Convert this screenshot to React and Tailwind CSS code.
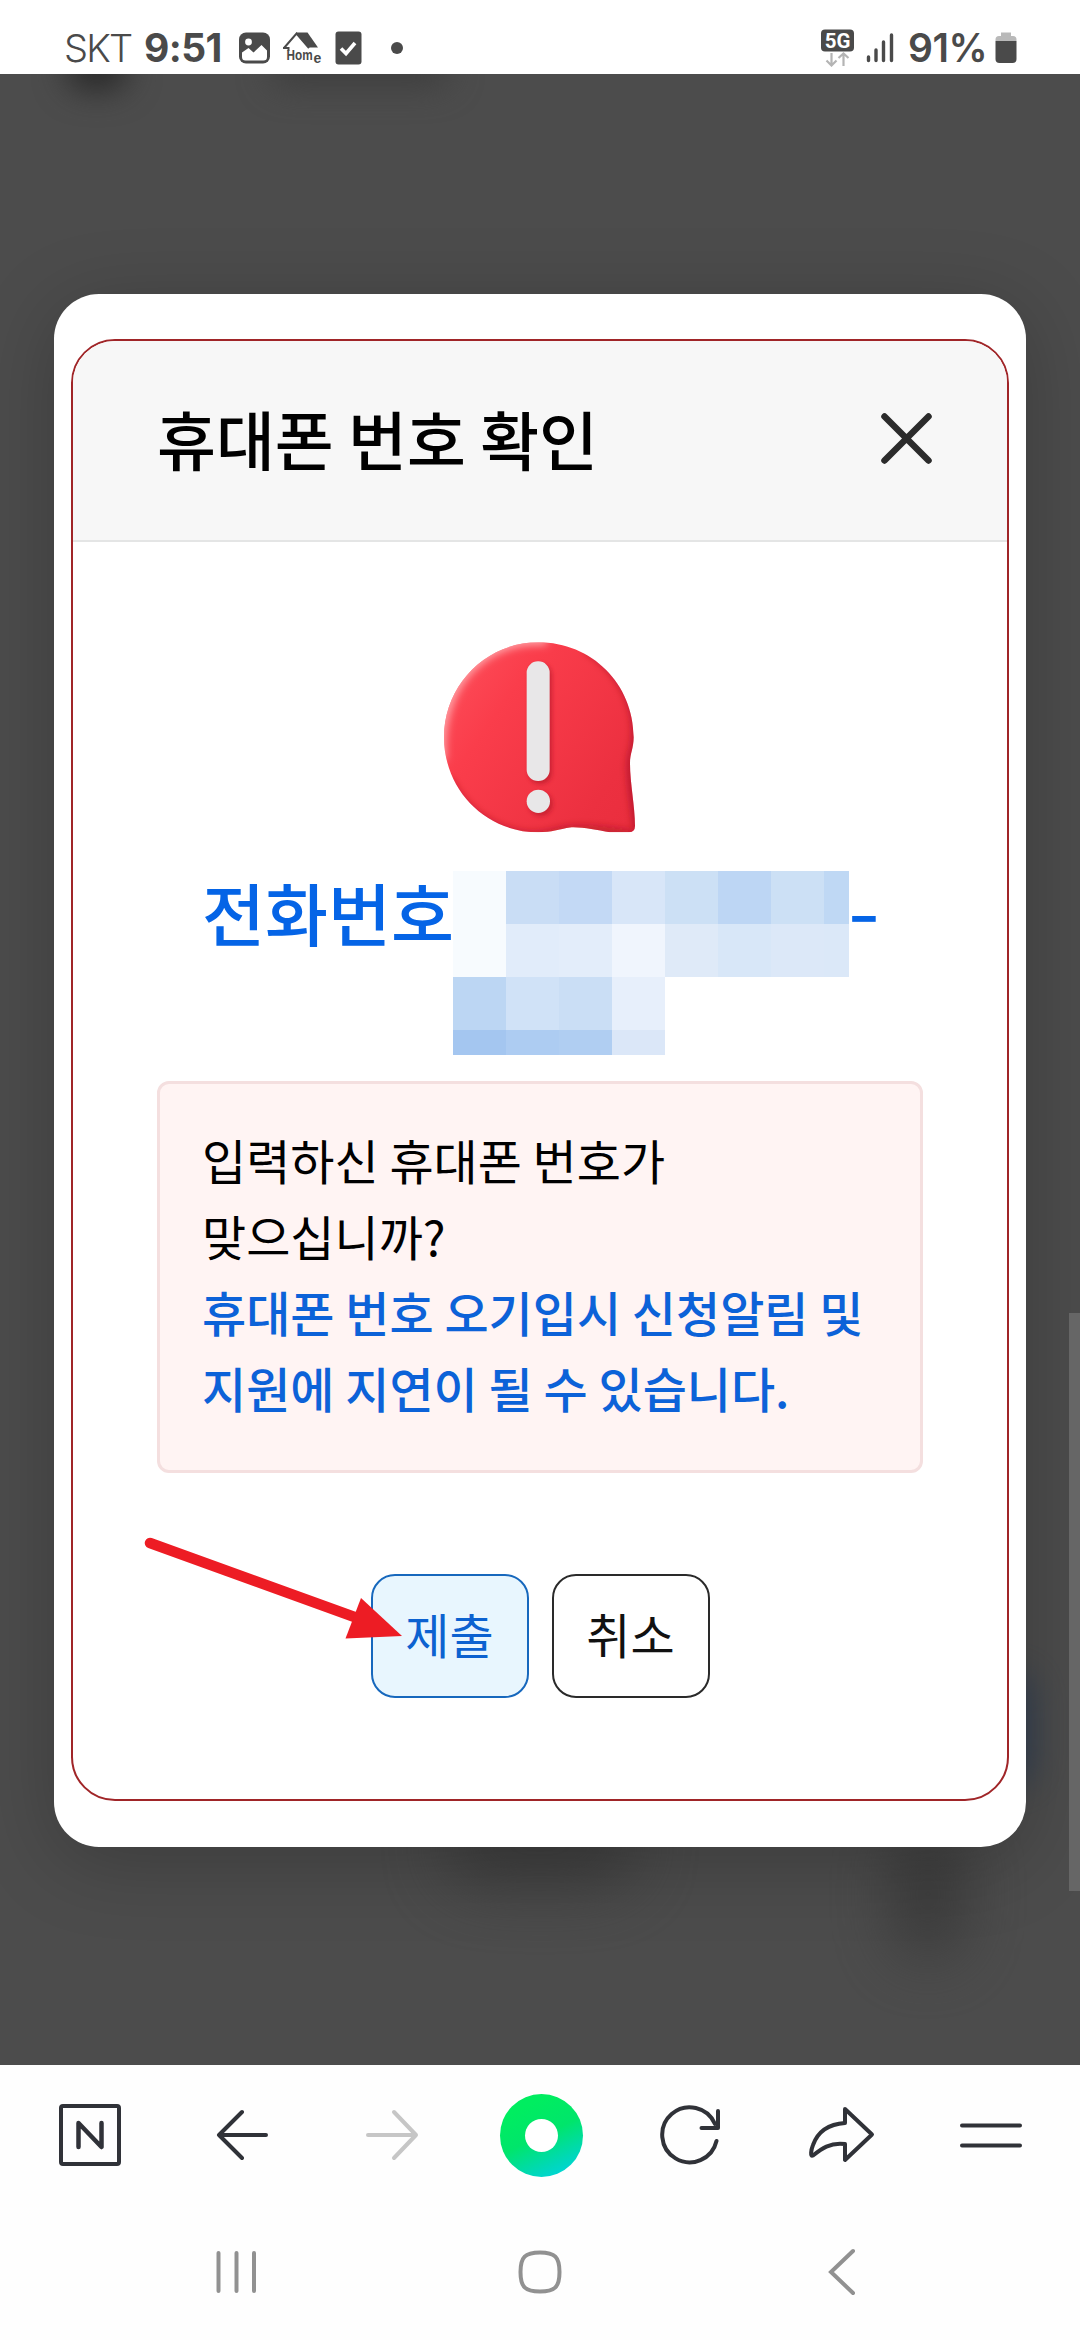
const KR = 'font-["Noto_Sans_CJK_KR",sans-serif]';

const MOSAIC = [
  ["bg-[#f7fbfe]", "bg-[#c9ddf5]", "bg-[#c3d9f5]", "bg-[#d8e6f8]", "bg-[#cce0f5]", "bg-[#bdd6f4]", "bg-[#cce0f5]", "bg-[#bfd8f4]"],
  ["bg-[#f7fbfe]", "bg-[#e1ecfa]", "bg-[#e3edfa]", "bg-[#f0f5fd]", "bg-[#dfeaf8]", "bg-[#d8e7f8]", "bg-[#dce8f8]", "bg-[#dbe8f8]"],
  ["bg-[#bcd6f3]", "bg-[#d0e2f7]", "bg-[#cadef5]", "bg-[#e7effb]"],
  ["bg-[#a4c6f0]", "bg-[#adccf2]", "bg-[#b0cef2]", "bg-[#dbe7f8]"],
];

function StatusBar() {
  return (
    <header className="flex h-[74px] shrink-0 items-center bg-white pt-[22px] pl-[64px] pr-[63px] font-[Inter,sans-serif] text-[#4a4a4a]">
      <span className="w-[80px] text-[38px] leading-[44px] font-light tracking-[-1.8px]">SKT</span>
      <span className="w-[95px] text-[39px] leading-[44px] font-bold tracking-[-0.600px]">9:51</span>
      <svg className="h-[32px] w-[32px]" viewBox="0 0 32 32">
        <rect x="0" y="0.5" width="31" height="31" rx="7" fill="#4a4a4a" />
        <circle cx="9.5" cy="10" r="3.4" fill="#fff" />
        <path d="M3 20.5 L9.5 16 L14.5 20.5 L22.5 13 L28 18.5 V25 Q28 28.5 24.5 28.5 H6.500 Q3 28.5 3 25 Z" fill="#fff" />
      </svg>
      <svg className="ml-[11px] h-[36px] w-[42px]" viewBox="0 0 42 36">
        <path d="M2 18 L14.500 3.500 L27 18 M1 18 H6.500 V21" fill="none" stroke="#4a4a4a" strokeWidth="2" />
        <path d="M14 2.500 H25.500 L36 17.500 H27 Z" fill="#4a4a4a" />
        <text x="0" y="0" transform="translate(4.5 30) scale(0.76 1)" fontSize="15.500" fontWeight="700" fontFamily="Liberation Sans" fill="#4a4a4a">Hom</text>
        <text x="31.500" y="33" fontSize="14" fontWeight="700" fontFamily="Liberation Sans" fill="#4a4a4a">e</text>
      </svg>
      <svg className="ml-[11px] h-[34px] w-[28px]" viewBox="0 0 28 34">
        <rect x="0.5" y="0.5" width="26" height="33" rx="3" fill="#4a4a4a" />
        <path d="M6 17.5 L11 22.5 L20 12" fill="none" stroke="#fff" strokeWidth="3.6" />
      </svg>
      <span className="ml-[28px] size-[12px] rounded-full bg-[#4a4a4a]" />
      <svg className="ml-auto h-[38px] w-[35px]" viewBox="0 0 35 38">
        <rect x="1" y="0.500" width="33" height="22" rx="4" fill="#4a4a4a" />
        <text x="17.5" y="18.500" textAnchor="middle" fontSize="20.500" fontWeight="700" fontFamily="Roboto" fill="#fff">5G</text>
        <path d="M11.500 24 V36 M6.500 31.500 L11.500 36.500 L16.500 31.500 M23.500 37 V25 M18.500 29 L23.500 24.500 L28.500 29" fill="none" stroke="#b4b4b4" strokeWidth="2.2" />
      </svg>
      <svg className="ml-[11px] h-[32px] w-[30px]" viewBox="0 0 30 32">
        <path d="M2.500 25 V28.500 M10 18 V28.500 M17.500 10 V28.500 M25.500 3 V28.500" stroke="#4a4a4a" strokeWidth="3.4" strokeLinecap="round" />
      </svg>
      <span className="ml-[12px] w-[87px] text-[39px] leading-[44px] font-semibold tracking-[-0.500px] whitespace-nowrap">91%</span>
      <svg className="h-[32px] w-[22px]" viewBox="0 0 22 32">
        <path d="M0.500 9 V7.500 Q0.500 4 4 4 H6 V0.500 H16 V4 H18 Q21.500 4 21.500 7.500 V9 Z" fill="#b9b9b9" />
        <path d="M0.500 9 H21.500 V27 Q21.500 31 17.500 31 H4.500 Q0.500 31 0.500 27 Z" fill="#4a4a4a" />
      </svg>
    </header>
  );
}

function AlertBubble() {
  return (
    <svg className="mx-auto block size-[240px]" viewBox="0 0 720 720">
      <defs>
        <linearGradient id="bubble" x1="0" y1="0.1" x2="1" y2="0.8">
          <stop offset="0" stopColor="#ff5560" />
          <stop offset="0.35" stopColor="#fa3d4b" />
          <stop offset="0.8" stopColor="#ec3040" />
          <stop offset="1" stopColor="#e92d3d" />
        </linearGradient>
        <clipPath id="bubbleClip">
          <path d="M355 67 C515 67 641 192 641 352 C641 385 630 400 630 430 C630 490 645 560 645 618 Q645 637 625 637 H570 C530 630 490 621 455 622 C410 628 400 637 355 637 C197 637 72 510 72 352 C72 195 197 67 355 67 Z" />
        </clipPath>
        <filter id="soft" x="-20%" y="-20%" width="140%" height="140%"><feGaussianBlur stdDeviation="12" /></filter>
        <filter id="markShadow" x="-50%" y="-50%" width="200%" height="200%"><feGaussianBlur stdDeviation="6" /></filter>
      </defs>
      <g clipPath="url(#bubbleClip)">
        <rect width="720" height="720" fill="url(#bubble)" />
        <path d="M65 420 C45 200 190 45 380 62" fill="none" stroke="#ffb0b4" strokeWidth="26" filter="url(#soft)" />
        <path d="M500 85 C620 160 665 280 643 390 C622 430 642 520 655 640" fill="none" stroke="#8f1020" strokeWidth="14" filter="url(#soft)" />
        <path d="M85 480 C150 610 290 670 400 640 Q460 615 640 645" fill="none" stroke="#a01222" strokeWidth="14" filter="url(#soft)" />
      </g>
      <g fill="#b01525" opacity="0.6" filter="url(#markShadow)">
        <rect x="326" y="132" width="70" height="360" rx="34" />
        <circle cx="362" cy="552" r="36" />
      </g>
      <rect x="320" y="124" width="69" height="359" rx="34" fill="#e8e7e8" />
      <circle cx="355" cy="544" r="35" fill="#e8e7e8" />
    </svg>
  );
}

function PhoneLine() {
  return (
    <div className={`flex h-[184px] items-start pl-[129px] text-[68.500px] leading-[100px] font-medium text-[#0564e6] ${KR}`}>
      <span className="-mt-[9px] w-[251px] whitespace-nowrap">전화번호</span>
      <div className="flex flex-col">
        {MOSAIC.map((row, r) => (
          <div key={r} className={r === 3 ? "flex h-[25px]" : "flex h-[53px]"}>
            {row.map((c, i) => (
              <span key={i} className={`${i === 7 ? "w-[25px]" : "w-[53px]"} ${c}`} />
            ))}
          </div>
        ))}
      </div>
      <span className="-mt-[12px] -ml-[1px] origin-left scale-x-[1.3]">-</span>
    </div>
  );
}

function Dialog() {
  return (
    <section className="relative mx-[54px] mt-[220px] h-[1553px] rounded-[45px] bg-white px-[17px] pt-[45px] shadow-[0_14px_80px_rgba(0,0,0,0.22)]">
      <div className="flex h-[1462px] flex-col overflow-hidden rounded-[44px] border-2 border-[#a02528]">
        <div className="flex h-[201px] shrink-0 items-center justify-between border-b-2 border-[#e4e5e5] bg-[#f7f7f7] pr-[75px] pb-[5px] pl-[84px]">
          <h1 className={`-mt-[3px] text-[64px] leading-[90px] font-medium text-black ${KR}`}>휴대폰 번호 확인</h1>
          <svg className="size-[52px]" viewBox="0 0 52 52">
            <path d="M4.500 4.500 L48.500 48.500 M48.500 4.500 L4.500 48.500" stroke="#2b2b2b" strokeWidth="6.500" strokeLinecap="round" />
          </svg>
        </div>
        <div className="pt-[78px]">
          <AlertBubble />
        </div>
        <div className="mt-[11px]">
          <PhoneLine />
        </div>
        <div className={`mx-[84px] mt-[26px] h-[392px] shrink-0 rounded-[12px] border-[3px] border-[#f4dfdf] bg-[#fff4f3] pt-[37px] pl-[42px] text-[48px] leading-[76px] text-black ${KR}`}>
          <p>입력하신 휴대폰 번호가<br />맞으십니까?</p>
          <p className="font-medium whitespace-nowrap text-[#0c62d8]">휴대폰 번호 오기입시 신청알림 및<br />지원에 지연이 될 수 있습니다.</p>
        </div>
        <div className={`mt-[101px] flex justify-center gap-[23px] text-[48px] ${KR}`}>
          <button className="h-[124px] w-[158px] rounded-[24px] border-2 border-[#1768bd] bg-[#e8f6fe] pb-[7px] text-[#0c62d0]">제출</button>
          <button className="h-[124px] w-[158px] rounded-[24px] border-2 border-[#2a2a2a] bg-white pb-[7px] text-[#111]">취소</button>
        </div>
      </div>
      <svg className="absolute top-[1235px] left-[82px] h-[120px] w-[274px]" viewBox="136 1529 274 120">
        <path d="M150 1543 L360 1619" stroke="#ed1c24" strokeWidth="10.500" strokeLinecap="round" />
        <path d="M361 1598 L402 1636 L345.500 1638.500 Z" fill="#ed1c24" />
      </svg>
    </section>
  );
}

function BrowserBar() {
  const line = { fill: "none", stroke: "#303238", strokeWidth: 4, strokeLinecap: "round", strokeLinejoin: "round" };
  return (
    <nav className="flex h-[140px] shrink-0 items-center justify-between pr-[56px] pl-[57px]">
      <svg className="size-[66px]" viewBox="0 0 66 66">
        <rect x="4" y="4" width="58" height="58" rx="2" {...line} />
        <path d="M21.500 45 V21 L44.500 45 V21" {...line} strokeWidth="4.500" />
      </svg>
      <svg className="ml-[24px] size-[56px]" viewBox="2 0 56 56">
        <path d="M28 5 L5 28 L28 51 M5 28 H52" {...line} />
      </svg>
      <svg className="ml-[24px] size-[56px]" viewBox="0 0 56 56">
        <path d="M29 5 L51 28 L29 51 M51 28 H3" {...line} stroke="#c6c6c6" />
      </svg>
      <span className="ml-[10px] flex size-[83px] items-center justify-center rounded-full bg-[linear-gradient(155deg,#00ed60_20%,#00e56b_50%,#00d8b8_78%,#00d3f0_100%)]">
        <span className="size-[33px] rounded-full bg-white" />
      </span>
      <svg className="ml-[5px] size-[64px]" viewBox="657 2103 64 64">
        <path d="M715.500 2141 A27.500 27.500 0 1 1 714 2124 M717 2111 V2128 H700.500" {...line} />
      </svg>
      <svg className="ml-[16px] size-[70px]" viewBox="806 2100 70 70">
        <path d="M844 2109 L871 2134.500 L844 2160 V2144 C829 2142 820 2149 812 2155.500 C809 2157 810 2150 812 2145 C817 2131 829 2124 844 2123 Z" {...line} />
      </svg>
      <svg className="ml-[12px] h-[40px] w-[66px]" viewBox="0 0 66 40">
        <path d="M4 10.500 H62 M4 30.500 H62" {...line} />
      </svg>
    </nav>
  );
}

function SystemBar() {
  return (
    <footer className="flex h-[134px] shrink-0 items-center justify-between pr-[223px] pl-[214px]">
      <svg className="size-[46px]" viewBox="0 0 46 46">
        <path d="M4.500 4 V42 M22.500 4 V42 M40 4 V42" stroke="#919191" strokeWidth="4" strokeLinecap="round" />
      </svg>
      <svg className="mr-[8px] size-[46px]" viewBox="0 0 46 46">
        <path d="M23 3.500 C38 3.500 42.500 8 42.500 23 C42.500 38 38 42.500 23 42.500 C8 42.500 3.500 38 3.500 23 C3.500 8 8 3.500 23 3.500 Z" fill="none" stroke="#919191" strokeWidth="4" />
      </svg>
      <svg className="h-[48px] w-[30px]" viewBox="0 0 30 48">
        <path d="M26 3 L4 24 L26 45" fill="none" stroke="#919191" strokeWidth="4" strokeLinecap="round" />
      </svg>
    </footer>
  );
}

export default function App() {
  return (
    <div className="flex h-[2340px] w-[1080px] flex-col overflow-hidden bg-[#fefefe]">
      <StatusBar />
      <main className="relative h-[1991px] shrink-0 overflow-hidden bg-[#4c4c4c]">
        <div className="absolute -top-[28px] left-[66px] h-[44px] w-[62px] rounded-full bg-[#282828] blur-[16px]" />
        <div className="absolute -top-[24px] left-[270px] h-[36px] w-[180px] rounded-full bg-[#3e3e3e] blur-[16px]" />
        <div className="absolute top-[1735px] left-[445px] h-[75px] w-[190px] rounded-full bg-[#383838] opacity-80 blur-[32px]" />
        <div className="absolute top-[1755px] left-[895px] h-[130px] w-[66px] rounded-full bg-[#363636] opacity-80 blur-[30px]" />
        <div className="absolute top-[1600px] left-[990px] h-[110px] w-[42px] rounded-full bg-[#2c3d55] opacity-80 blur-[16px]" />
        <Dialog />
        <div className="absolute top-[1239px] right-0 h-[578px] w-[11px] bg-[#666666]" />
      </main>
      <BrowserBar />
      <SystemBar />
    </div>
  );
}
